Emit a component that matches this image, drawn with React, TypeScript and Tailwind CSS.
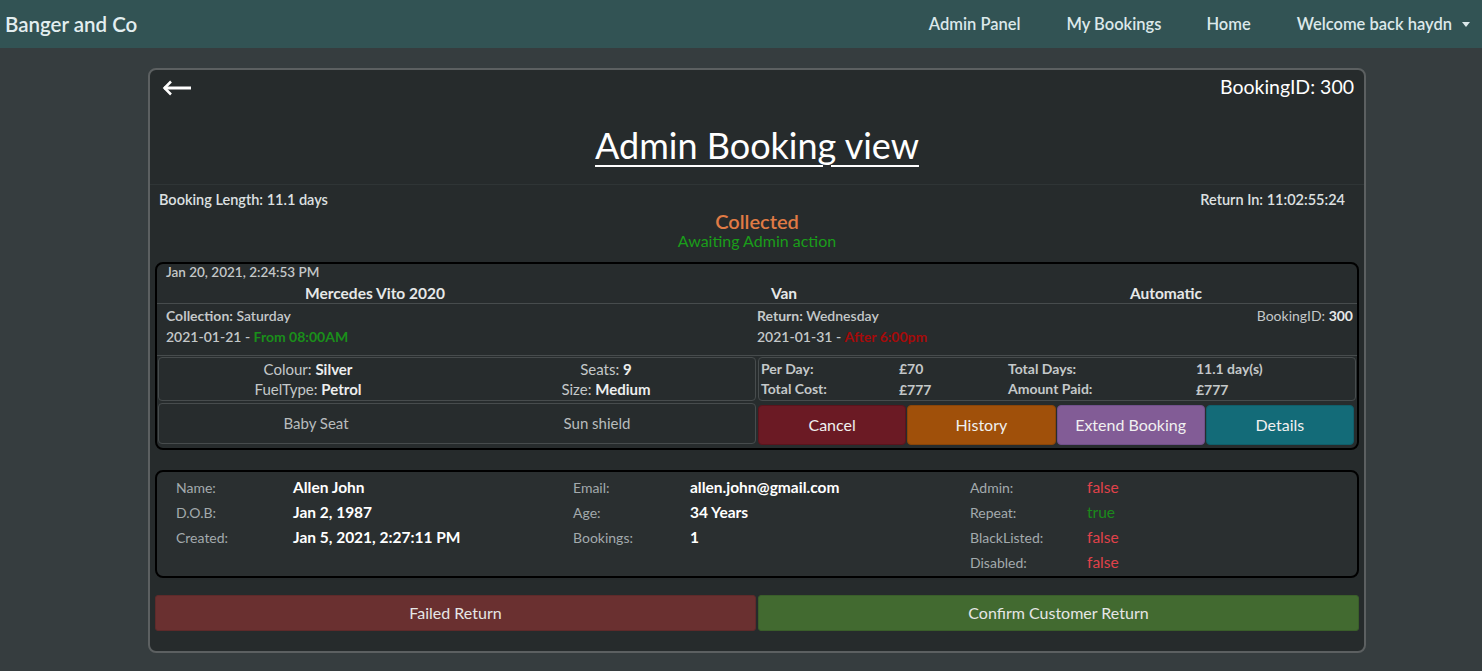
import React from 'react';

const font = 'font-["Lato","Noto_Sans",sans-serif]';

function BackArrow() {
  return (
    <svg width="30" height="16" viewBox="0 0 30 16" fill="none">
      <path d="M2 8H29" stroke="white" strokeWidth="3" />
      <path d="M9 1.5L2.5 8L9 14.5" stroke="white" strokeWidth="2.5" />
    </svg>
  );
}

function Nav() {
  return (
    <nav className="h-12 bg-[#325354] flex items-center justify-between pl-[5px] pr-[12px]">
      <span className="text-[20.5px] font-semibold text-[#e3eef0]">Banger and Co</span>
      <div className="flex items-center text-[16.5px] font-semibold text-[#dce8ea]">
        <span>Admin Panel</span>
        <span className="ml-[46px]">My Bookings</span>
        <span className="ml-[45px]">Home</span>
        <span className="ml-[46px] flex items-center">
          Welcome back haydn
          <span className="ml-[10px] w-0 h-0 border-l-[4px] border-r-[4px] border-t-[5px] border-l-transparent border-r-transparent border-t-[#dce8ea]" />
        </span>
      </div>
    </nav>
  );
}

function BookingCard() {
  return (
    <div className="mx-[5px] mt-[12px] border-2 border-black rounded-[8px] bg-[#272c2d] text-[#c4c8c9]">
      <div className="px-[9px] text-[13.5px] font-semibold leading-[16px]">Jan 20, 2021, 2:24:53 PM</div>
      <div className="grid grid-cols-[436px_1fr_1fr] text-[15.5px] font-bold text-[#e6e8e8] leading-[18px] pt-[4px] pb-[1px]">
        <div className="text-center">Mercedes Vito 2020</div>
        <div className="text-center">Van</div>
        <div className="text-center">Automatic</div>
      </div>
      <div className="border-t border-[#474c4d] grid grid-cols-2 px-[9px] pt-[1px] pb-[8px] text-[14px] font-semibold leading-[21px]">
        <div>
          <div><span className="font-bold">Collection:</span> Saturday</div>
          <div>2021-01-21 - <span className="text-[#1a8f1a] font-bold">From 08:00AM</span></div>
        </div>
        <div className="flex justify-between">
          <div>
            <div><span className="font-bold">Return:</span> Wednesday</div>
            <div>2021-01-31 - <span className="text-[#a50a0a] font-bold">After 6:00pm</span></div>
          </div>
          <div className="-mr-[5px] font-normal">BookingID: <span className="font-bold text-[#e6e8e8]">300</span></div>
        </div>
      </div>
      <div className="border-t border-[#474c4d] grid grid-cols-2 gap-x-[2px] px-[1px] pt-[1px] pb-[3px]">
        <div className="flex flex-col gap-[2px]">
          <div className="h-[44px] border border-[#474c4d] rounded-[4px] grid grid-cols-2 text-[15px] leading-[20px] text-center pt-[1px]">
            <div>
              <div>Colour: <span className="font-bold text-[#eceeee]">Silver</span></div>
              <div>FuelType: <span className="font-bold text-[#eceeee]">Petrol</span></div>
            </div>
            <div>
              <div>Seats: <span className="font-bold text-[#eceeee]">9</span></div>
              <div>Size: <span className="font-bold text-[#eceeee]">Medium</span></div>
            </div>
          </div>
          <div className="h-[41px] border border-[#474c4d] rounded-[4px] grid grid-cols-2 items-center text-[15px] text-center text-[#b8bcbd]">
            <div className="pl-[16px]">Baby Seat</div>
            <div className="pr-[18px]">Sun shield</div>
          </div>
        </div>
        <div className="flex flex-col gap-[4px]">
          <div className="h-[44px] border border-[#474c4d] rounded-[4px] grid grid-cols-[138px_109px_188px_1fr] pl-[2px] pt-[1px] text-[14px] font-bold leading-[20px]">
            <div>
              <div>Per Day:</div>
              <div>Total Cost:</div>
            </div>
            <div>
              <div>£70</div>
              <div className="mt-[1px]">£777</div>
            </div>
            <div>
              <div>Total Days:</div>
              <div>Amount Paid:</div>
            </div>
            <div>
              <div>11.1 day(s)</div>
              <div className="mt-[1px]">£777</div>
            </div>
          </div>
          <div className="grid grid-cols-4 gap-[1px] h-[40px] pr-[2px] text-[16px] text-[#f0f0f0]">
            <button className="rounded-[4px] bg-[#6b1a24] border border-[#5a141c]">Cancel</button>
            <button className="rounded-[4px] bg-[#a0500a] border border-[#8a4508]">History</button>
            <button className="rounded-[4px] bg-[#825c96] border border-[#70508a]">Extend Booking</button>
            <button className="rounded-[4px] bg-[#136b78] border border-[#105e6a]">Details</button>
          </div>
        </div>
      </div>
    </div>
  );
}

function Field({ label, value, color }: { label: string; value: string; color?: string }) {
  return (
    <div className="flex h-[25px] items-center">
      <span className="w-[117px] text-[14px] text-[#a3aaad]">{label}</span>
      <span className={`text-[15.5px] ${color ?? 'text-white font-bold'}`}>{value}</span>
    </div>
  );
}

function UserCard() {
  return (
    <div className="mx-[5px] mt-[20px] h-[108px] border-2 border-black rounded-[8px] bg-[#2a2f30] grid grid-cols-[397px_397px_1fr] pl-[19px] pt-[3px]">
      <div>
        <Field label="Name:" value="Allen John" />
        <Field label="D.O.B:" value="Jan 2, 1987" />
        <Field label="Created:" value="Jan 5, 2021, 2:27:11 PM" />
      </div>
      <div>
        <Field label="Email:" value="allen.john@gmail.com" />
        <Field label="Age:" value="34 Years" />
        <Field label="Bookings:" value="1" />
      </div>
      <div>
        <Field label="Admin:" value="false" color="text-[#e0424a]" />
        <Field label="Repeat:" value="true" color="text-[#1b8a1b]" />
        <Field label="BlackListed:" value="false" color="text-[#e0424a]" />
        <Field label="Disabled:" value="false" color="text-[#e0424a]" />
      </div>
    </div>
  );
}

export default function App() {
  return (
    <div className={`min-h-screen bg-[#363d3f] ${font}`}>
      <Nav />
      <div className="pt-5 pl-[148px]">
        <div className="w-[1218px] border-2 border-[#5c6061] rounded-[8px] bg-[#262b2c] pb-[20px]">
          <div className="h-[115px] border-b border-[#2f3536] px-[12px] pt-[5px]">
            <div className="flex justify-between items-start">
              <div className="mt-[5px]"><BackArrow /></div>
              <span className="text-[19.5px] text-white leading-[24px] -mr-[2px]">BookingID: 300</span>
            </div>
            <h1 className="text-center text-[36px] text-white underline underline-offset-[6px] decoration-2 leading-[44px] mt-[24px]">
              Admin Booking view
            </h1>
          </div>
          <div className="flex justify-between px-[9px] pr-[19px] pt-[6px] text-[14.5px] font-semibold text-[#dde0e1] leading-[18px]">
            <span>Booking Length: 11.1 days</span>
            <span>Return In: 11:02:55:24</span>
          </div>
          <div className="text-center">
            <div className="text-[20px] font-semibold text-[#e07b45] leading-[22px] mt-[1px]">Collected</div>
            <div className="text-[16px] text-[#1a9d1a] leading-[18px]">Awaiting Admin action</div>
          </div>
          <BookingCard />
          <UserCard />
          <div className="mx-[5px] mt-[17px] grid grid-cols-2 gap-[2px] h-[36px] text-[16px] text-[#e6e6e6]">
            <button className="rounded-[3px] bg-[#6a3030] border border-[#5e2a2a]">Failed Return</button>
            <button className="rounded-[3px] bg-[#426a30] border border-[#3a5e2a]">Confirm Customer Return</button>
          </div>
        </div>
      </div>
    </div>
  );
}
